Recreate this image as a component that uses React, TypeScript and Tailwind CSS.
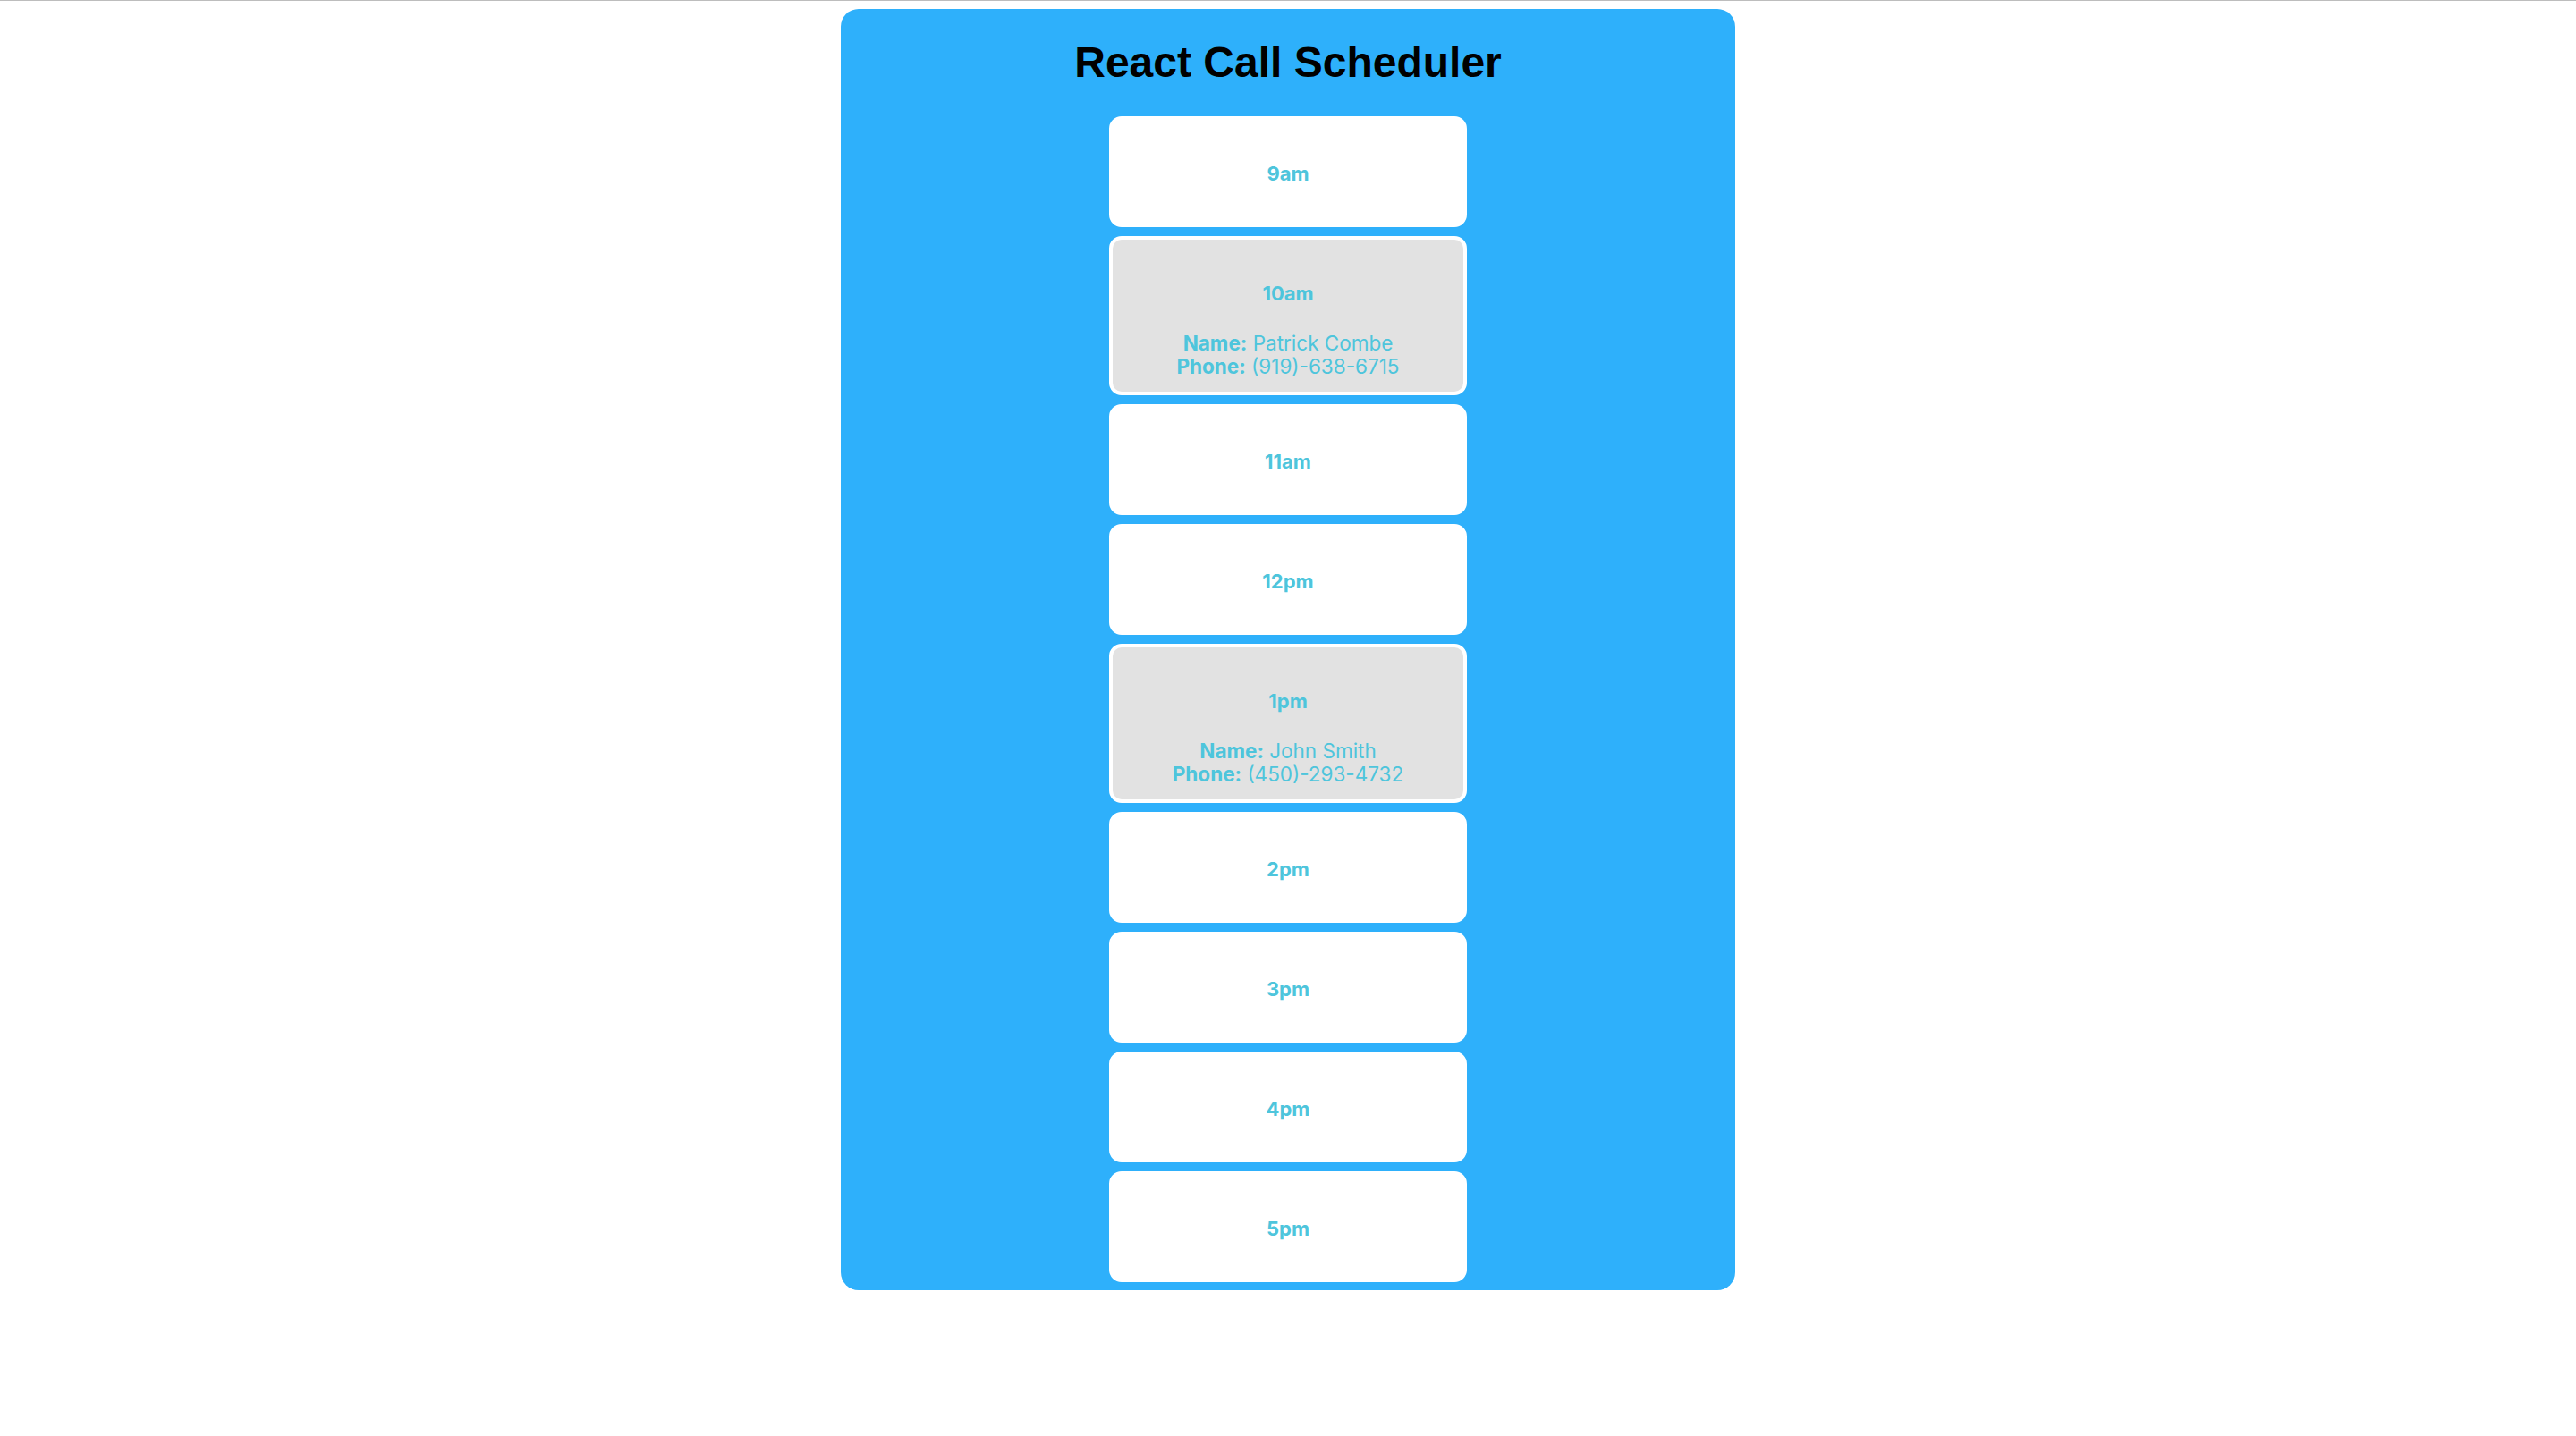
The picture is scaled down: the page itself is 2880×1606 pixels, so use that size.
import React from "react";

type Slot = { time: string; name?: string; phone?: string };

const slots: Slot[] = [
  { time: "9am" },
  { time: "10am", name: "Patrick Combe", phone: "(919)-638-6715" },
  { time: "11am" },
  { time: "12pm" },
  { time: "1pm", name: "John Smith", phone: "(450)-293-4732" },
  { time: "2pm" },
  { time: "3pm" },
  { time: "4pm" },
  { time: "5pm" },
];

function Card({ slot }: { slot: Slot }) {
  const booked = !!slot.name;
  return (
    <div
      className={
        booked
          ? "w-[400px] rounded-[14px] border-[4px] border-white bg-[#e2e2e2] pt-[48px] pb-[15px] text-center text-[#4ec5dc]"
          : "w-[400px] rounded-[14px] border-[4px] border-white bg-white pt-[48px] pb-[44px] text-center text-[#4ec5dc]"
      }
    >
      <div className="h-[24px] text-[22px] leading-[24px] font-bold">{slot.time}</div>
      {booked && (
        <div className="mt-[31px] text-[22.5px] leading-[26px]">
          <div>
            <span className="font-bold">Name:</span> {slot.name}
          </div>
          <div>
            <span className="font-bold">Phone:</span> {slot.phone}
          </div>
        </div>
      )}
    </div>
  );
}

export default function App() {
  return (
    <div className="min-h-[1606px] w-full bg-white" style={{ fontFamily: "Inter, 'Noto Sans', sans-serif" }}>
      <div className="h-[1px] w-full bg-[#bdbdbd]" />
      <div className="mx-auto mt-[9px] flex w-[1000px] flex-col items-center rounded-[20px] bg-[#2eb0fb] pt-[32px] pb-[9px]">
        <h1
          className="mb-[32px] h-[56px] text-[48px] leading-[56px] font-bold text-black"
          style={{ fontFamily: "'Liberation Sans', Arial, sans-serif" }}
        >
          React Call Scheduler
        </h1>
        <div className="flex flex-col items-center gap-[10px]">
          {slots.map((s) => (
            <Card key={s.time} slot={s} />
          ))}
        </div>
      </div>
    </div>
  );
}
